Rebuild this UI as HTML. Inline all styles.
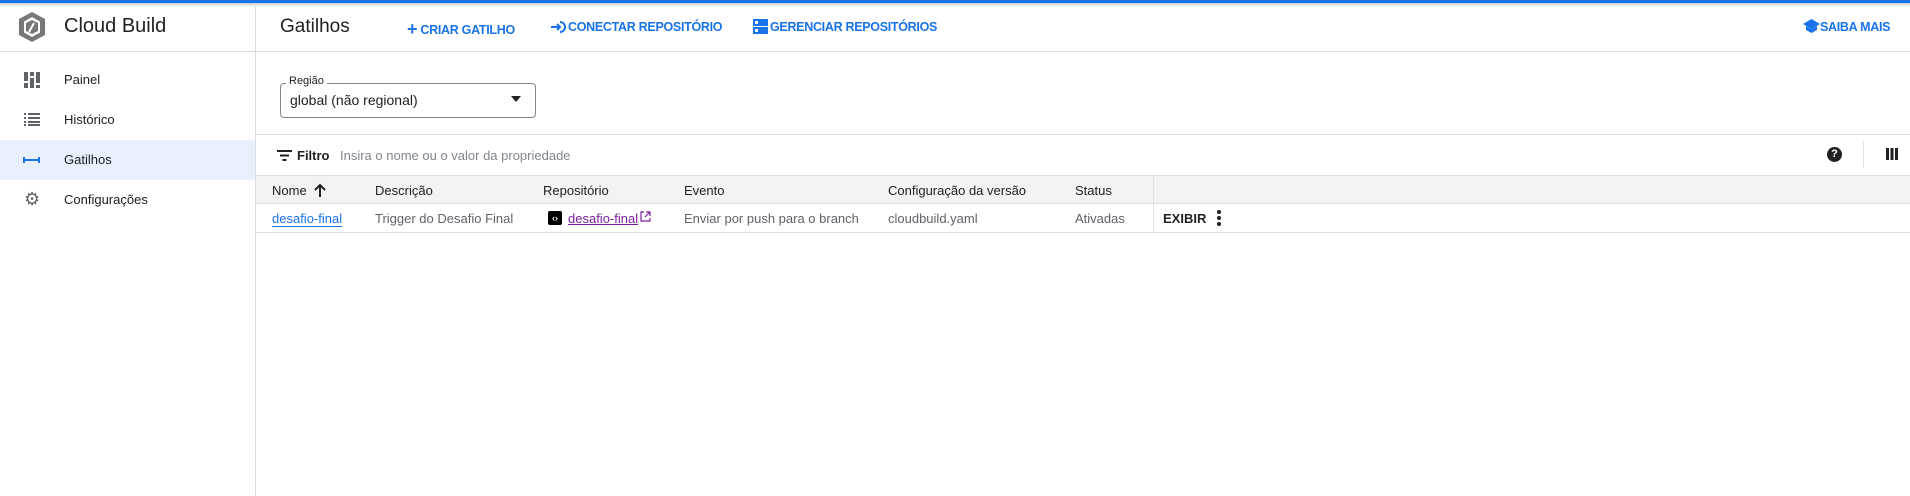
<!DOCTYPE html>
<html><head><meta charset="utf-8"><style>
*{box-sizing:border-box;margin:0;padding:0}
body{width:1910px;height:496px;overflow:hidden;background:#fff;font-family:"Liberation Sans",Arial,sans-serif;color:#202124;position:relative}
.a{position:absolute;white-space:nowrap}
.blue{color:#1a73e8}
.btn{font-size:12.5px;font-weight:bold;color:#1a73e8;letter-spacing:-.3px}
.nav{font-size:13px;color:#202124}
.th{font-size:13px;color:#202124;top:183px}
.td{font-size:13px;color:#5f6368;top:211px}
</style></head><body>
<div class="a" style="left:0;top:0;width:1910px;height:3px;background:#1a73e8"></div>
<div class="a" style="left:0;top:3px;width:1910px;height:4px;background:linear-gradient(#ccc,#fff)"></div>
<div class="a" style="left:0;top:51px;width:1910px;height:1px;background:#dadce0"></div>
<div class="a" style="left:255px;top:3px;width:1px;height:493px;background:#dadce0"></div>
<svg class="a" style="left:17px;top:11px" width="30" height="32" viewBox="0 0 30 32"><path d="M15 1 L28 8 V24 L15 31 L2 24 V8 Z" fill="#777"/><path d="M15 6 L23 10.5 V21.5 L15 26 L7 21.5 V10.5Z" fill="#fff"/><path d="M15 9 L21 12 V20 L15 23 L9 20 V12Z" fill="#777"/><path d="M17 12 L12 21" stroke="#fff" stroke-width="2"/></svg>
<div class="a" style="left:64px;top:15px;font-size:20px">Cloud Build</div>
<div class="a" style="left:280px;top:16px;font-size:19px">Gatilhos</div>
<div class="a btn" style="left:407px;top:18px"><span style="font-size:18px;position:relative;top:1px">+</span> CRIAR GATILHO</div>
<svg class="a" style="left:551px;top:20px" width="17" height="14" viewBox="0 0 17 14"><path d="M0 7h9M6 4l3 3-3 3" stroke="#1a73e8" stroke-width="2" fill="none"/><path d="M9 2a5 5 0 1 1 0 10" stroke="#1a73e8" stroke-width="2" fill="none"/></svg>
<div class="a btn" style="left:568px;top:20px">CONECTAR REPOSITÓRIO</div>
<svg class="a" style="left:753px;top:19px" width="15" height="15" viewBox="0 0 15 15"><rect width="15" height="7" fill="#1a73e8"/><rect y="8" width="15" height="7" fill="#1a73e8"/><rect x="2" y="2" width="3" height="3" fill="#fff"/><rect x="2" y="10" width="3" height="3" fill="#fff"/></svg>
<div class="a btn" style="left:770px;top:20px">GERENCIAR REPOSITÓRIOS</div>
<svg class="a" style="left:1803px;top:19px" width="17" height="15" viewBox="0 0 17 15"><path d="M8.5 0L17 5 8.5 10 0 5Z" fill="#1a73e8"/><path d="M3 7v4l5.5 3 5.5-3V7l-5.5 3Z" fill="#1a73e8"/></svg>
<div class="a btn" style="left:1820px;top:20px">SAIBA MAIS</div>
<svg class="a" style="left:24px;top:72px" width="16" height="16" viewBox="0 0 16 16" fill="#5f6368"><rect x="0" y="0" width="4" height="9"/><rect x="0" y="11" width="4" height="5"/><rect x="6" y="0" width="4" height="4"/><rect x="6" y="6" width="4" height="10"/><rect x="12" y="0" width="4" height="11"/><rect x="12" y="13" width="4" height="3"/></svg>
<div class="a nav" style="left:64px;top:72px">Painel</div>
<svg class="a" style="left:24px;top:113px" width="16" height="13" viewBox="0 0 16 13" fill="#5f6368"><rect y="0" width="2" height="2"/><rect y="4" width="2" height="2"/><rect y="8" width="2" height="2"/><rect y="11" width="2" height="2"/><rect x="4" y="0" width="12" height="2"/><rect x="4" y="4" width="12" height="2"/><rect x="4" y="8" width="12" height="2"/><rect x="4" y="11" width="12" height="2"/></svg>
<div class="a nav" style="left:64px;top:112px">Histórico</div>
<div class="a" style="left:0;top:140px;width:255px;height:40px;background:#e8f0fe"></div>
<svg class="a" style="left:23px;top:155px" width="17" height="10" viewBox="0 0 17 10"><path d="M2 5h13" stroke="#1a73e8" stroke-width="2"/><path d="M1 2v6M16 2v6" stroke="#1a73e8" stroke-width="2"/></svg>
<div class="a nav blue" style="left:64px;top:152px">Gatilhos</div>
<div class="a" style="left:24px;top:189px;font-size:18px;color:#5f6368">⚙</div>
<div class="a nav" style="left:64px;top:192px">Configurações</div>
<div class="a" style="left:280px;top:83px;width:256px;height:35px;border:1px solid #80868b;border-radius:4px"></div>
<div class="a" style="left:286px;top:75px;background:#fff;padding:0 3px;font-size:11px">Região</div>
<div class="a" style="left:290px;top:92px;font-size:14px">global (não regional)</div>
<svg class="a" style="left:511px;top:96px" width="10" height="6"><path d="M0 0h10L5 6Z" fill="#202124"/></svg>
<div class="a" style="left:256px;top:134px;width:1654px;height:1px;background:#dadce0"></div>
<svg class="a" style="left:277px;top:150px" width="15" height="11"><rect width="15" height="2" fill="#202124"/><rect x="3" y="4.5" width="9" height="2" fill="#202124"/><rect x="5.5" y="9" width="4" height="2" fill="#202124"/></svg>
<div class="a" style="left:297px;top:148px;font-size:13px;font-weight:bold">Filtro</div>
<div class="a" style="left:340px;top:148px;font-size:13px;color:#80868b">Insira o nome ou o valor da propriedade</div>
<div class="a" style="left:1827px;top:147px;width:15px;height:15px;border-radius:50%;background:#202124;color:#fff;font-size:11px;font-weight:bold;text-align:center;line-height:15px">?</div>
<div class="a" style="left:1863px;top:141px;width:1px;height:27px;background:#e0e0e0"></div>
<svg class="a" style="left:1886px;top:148px" width="12" height="12" fill="#202124"><rect width="3" height="12"/><rect x="4.5" width="3" height="12"/><rect x="9" width="3" height="12"/></svg>
<div class="a" style="left:256px;top:175px;width:1654px;height:29px;background:#f3f3f3;border-top:1px solid #e0e0e0;border-bottom:1px solid #e0e0e0"></div>
<div class="a" style="left:256px;top:232px;width:1654px;height:1px;background:#e0e0e0"></div>
<div class="a" style="left:1153px;top:175px;width:1px;height:58px;background:#e0e0e0"></div>
<div class="a th" style="left:272px">Nome</div>
<svg class="a" style="left:314px;top:183px" width="12" height="14"><path d="M6 14V2M1 7l5-5 5 5" stroke="#202124" stroke-width="2" fill="none"/></svg>
<div class="a th" style="left:375px">Descrição</div>
<div class="a th" style="left:543px">Repositório</div>
<div class="a th" style="left:684px">Evento</div>
<div class="a th" style="left:888px">Configuração da versão</div>
<div class="a th" style="left:1075px">Status</div>
<div class="a td" style="left:272px;color:#1a73e8;border-bottom:1px solid #1a73e8;line-height:15px">desafio-final</div>
<div class="a td" style="left:375px">Trigger do Desafio Final</div>
<div class="a" style="left:548px;top:211px;width:14px;height:14px;background:#000;border-radius:2px;color:#fff;font-size:9px;font-weight:bold;text-align:center;line-height:14px">‹›</div>
<div class="a td" style="left:568px;color:#7b1fa2;text-decoration:underline">desafio-final</div>
<svg class="a" style="left:640px;top:211px" width="11" height="11"><path d="M4 1H1v9h9V7M6 1h4v4M10 1L5 6" stroke="#7b1fa2" stroke-width="1.2" fill="none"/></svg>
<div class="a td" style="left:684px">Enviar por push para o branch</div>
<div class="a td" style="left:888px">cloudbuild.yaml</div>
<div class="a td" style="left:1075px">Ativadas</div>
<div class="a" style="left:1163px;top:211px;font-size:13px;font-weight:bold;color:#202124">EXIBIR</div>
<svg class="a" style="left:1217px;top:210px" width="4" height="16" fill="#202124"><circle cx="2" cy="2" r="2"/><circle cx="2" cy="8" r="2"/><circle cx="2" cy="14" r="2"/></svg>
</body></html>
